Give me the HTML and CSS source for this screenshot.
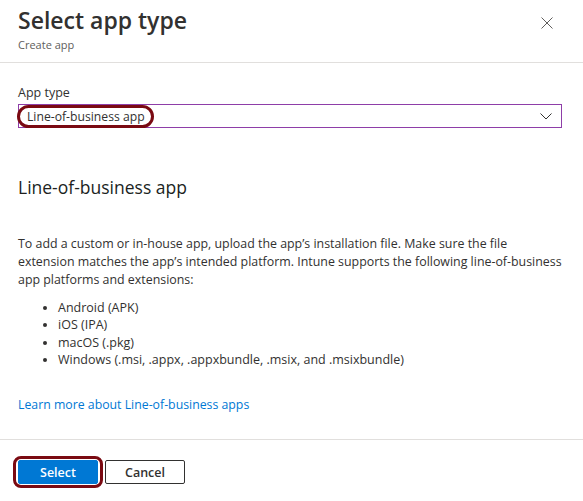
FILE: index.html
```html
<!DOCTYPE html>
<html lang="en">
<head>
    <meta charset="UTF-8">
    <title>Select app type</title>
    <link rel="stylesheet" href="styles.css">
</head>
<body>

<div class="blade">
    <div class="blade-header">
        <div class="titles">
            <h1>Select app type</h1>
            <div class="subtitle">Create app</div>
        </div>
        <button class="close" title="Close">
            <svg width="12" height="12" viewBox="0 0 12 12"><path d="M0.5 0.5 L11.5 11.5 M11.5 0.5 L0.5 11.5" stroke="#605e5c" stroke-width="1" fill="none"/></svg>
        </button>
    </div>

    <div class="blade-content">
        <label class="field-label">App type</label>
        <div class="dropdown">
            <span class="mark value">Line-of-business app</span>
            <svg class="chevron" width="12" height="7" viewBox="0 0 12 7"><path d="M0.5 0.5 L6 6 L11.5 0.5" stroke="#323130" stroke-width="1" fill="none"/></svg>
        </div>

        <h2>Line-of-business app</h2>

        <p>To add a custom or in-house app, upload the app’s installation file. Make sure the file<br>
        extension matches the app’s intended platform. Intune supports the following line-of-business app platforms and extensions:</p>
        <ul>
            <li>Android (APK)</li>
            <li>iOS (IPA)</li>
            <li>macOS (.pkg)</li>
            <li>Windows (.msi, .appx, .appxbundle, .msix, and .msixbundle)</li>
        </ul>

        <a class="learn" href="#">Learn more about Line-of-business apps</a>
    </div>

    <div class="blade-footer">
        <span class="mark btn-mark"><button class="btn primary">Select</button></span>
        <button class="btn">Cancel</button>
    </div>
</div>

</body>
</html>
```

FILE: styles.css
```css
body {
    margin: 0;
    font-family: "Open Sans", "Noto Sans", Arial, sans-serif;
    font-size: 12.5px;
    color: #323130;
    background: #fff;
}
.blade {
    display: flex;
    flex-direction: column;
    height: 100vh;
}
.blade-header {
    display: flex;
    justify-content: space-between;
    align-items: flex-start;
    padding: 5px 30px 0 18px;
    height: 57px;
    border-bottom: 1px solid #e1dfdd;
}
h1 {
    margin: 0;
    font-size: 23px;
    font-weight: 600;
    line-height: 30px;
    color: #323130;
}
.subtitle {
    font-size: 11px;
    line-height: 16px;
    color: #605e5c;
    margin-top: 2px;
}
.close {
    border: none;
    background: transparent;
    padding: 0;
    margin-top: 12px;
    width: 12px;
    height: 12px;
    display: flex;
}
.blade-content {
    flex: 1;
    padding: 21px 21px 0 18px;
}
.field-label {
    display: block;
    line-height: 18px;
    margin-bottom: 2px;
}
.dropdown {
    display: flex;
    align-items: center;
    justify-content: space-between;
    height: 24px;
    box-sizing: border-box;
    border: 1px solid #8e3ea8;
    padding-right: 9px;
}
.mark {
    border: 3px solid #7a0a12;
    display: inline-block;
    box-sizing: border-box;
}
.value {
    height: 23px;
    font-size: 12.2px;
    line-height: 17px;
    padding: 0 6px 0 7px;
    margin-left: -2px;
    border-radius: 12px;
}
h2 {
    margin: 45px 0 0;
    font-size: 17.5px;
    font-weight: 400;
    line-height: 28px;
    color: #201f1e;
}
p {
    margin: 34px 0 0;
    font-size: 12.4px;
    line-height: 18px;
}
ul {
    margin: 10px 0 0;
    padding-left: 40px;
    line-height: 17.3px;
}
.learn {
    display: inline-block;
    margin-top: 28px;
    font-size: 12.3px;
    color: #0078d4;
    text-decoration: none;
}
.blade-footer {
    display: flex;
    align-items: center;
    border-top: 1px solid #e1dfdd;
    padding: 16px 0 13px 13px;
    height: 32px;
}
.btn-mark {
    border-radius: 8px;
    padding: 1px 2px;
    display: flex;
}
.btn {
    width: 80px;
    height: 24px;
    box-sizing: border-box;
    font-family: inherit;
    font-size: 12.5px;
    font-weight: 600;
    border: 1px solid #323130;
    border-radius: 2px;
    background: #fff;
    color: #323130;
    padding: 0;
    margin-left: 2px;
}
.btn.primary {
    background: #0078d4;
    border-color: #0078d4;
    color: #fff;
    margin-left: 0;
}
```
